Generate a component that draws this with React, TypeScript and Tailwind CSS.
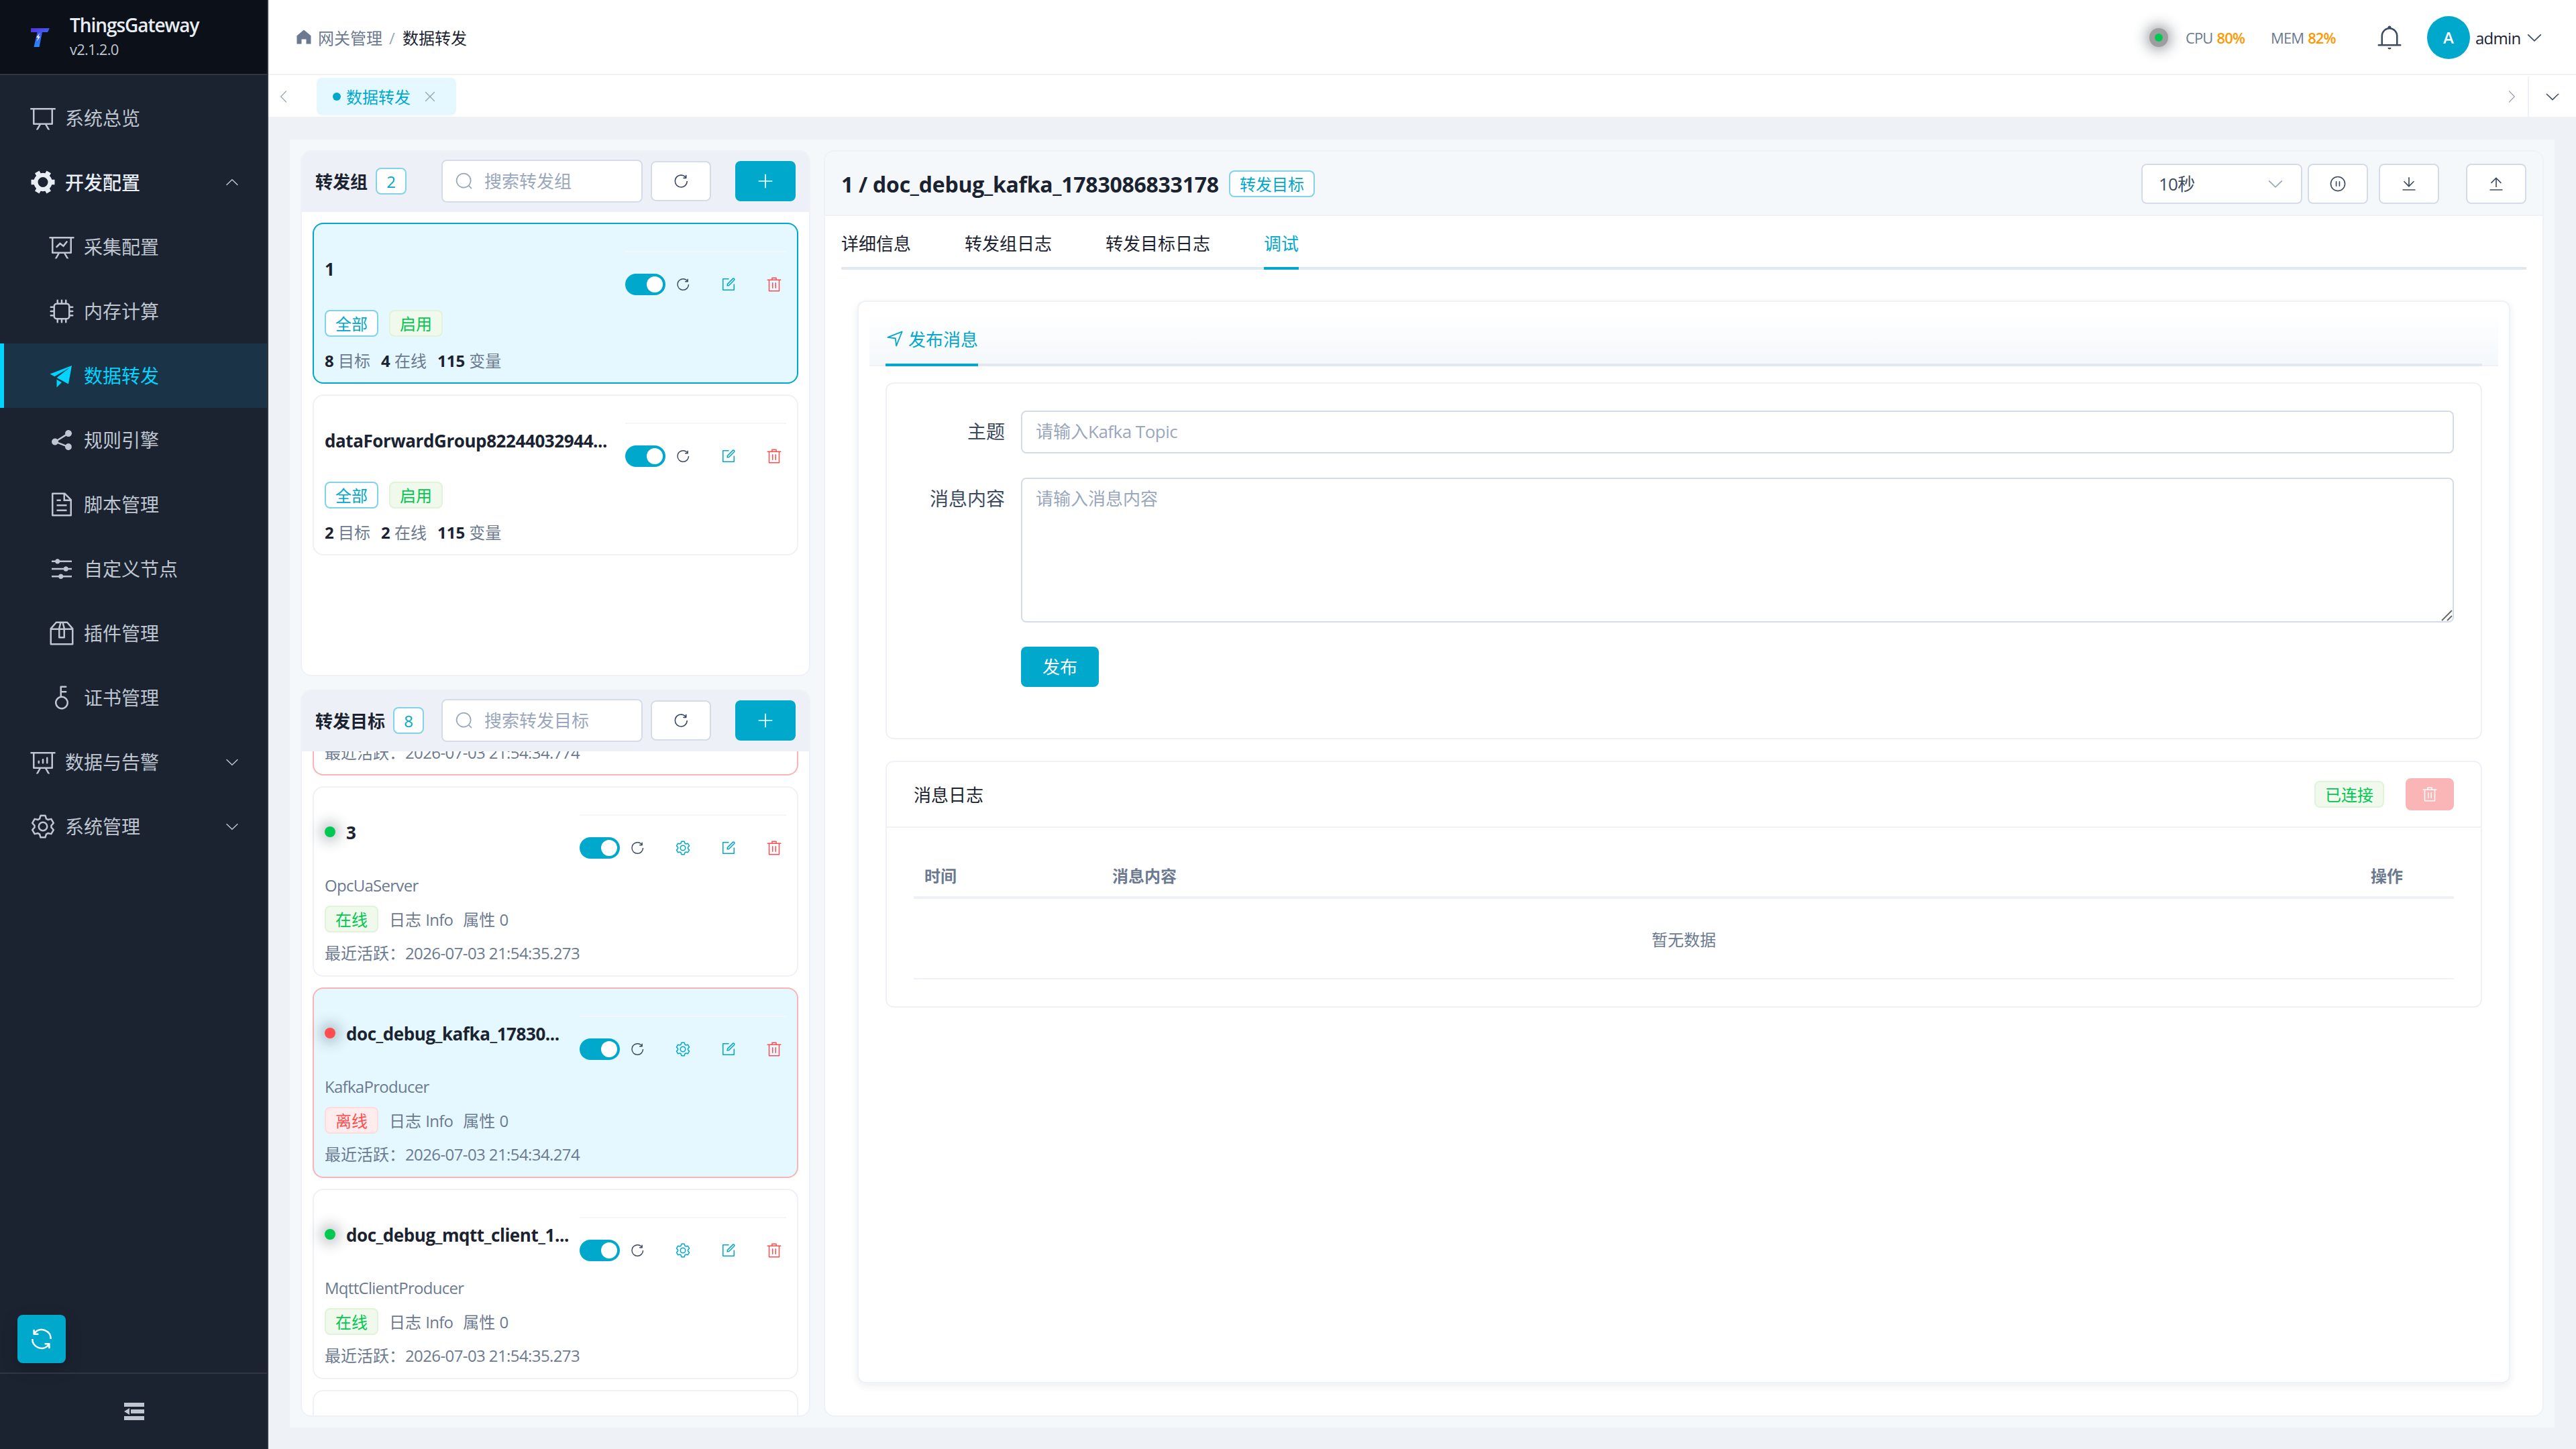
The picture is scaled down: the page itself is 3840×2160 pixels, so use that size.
import type { ReactNode } from "react";

const icons = {
    board: "M32 128h960v64H32zM192 192v512h640V192H192zm-64-64h768v608a32 32 0 0 1-32 32H160a32 32 0 0 1-32-32V128zM322.176 960H248.32l144.64-250.56 55.424 32L322.176 960zm453.888 0h-73.856L576 741.44l55.424-32L776.064 960z",
    tools: "M764.416 254.72a351.68 351.68 0 0 1 86.336 149.184H960v192.064H850.752a351.68 351.68 0 0 1-86.336 149.312l54.72 94.72-166.272 96-54.592-94.72a352.64 352.64 0 0 1-172.48 0L371.136 936l-166.272-96 54.72-94.72a351.68 351.68 0 0 1-86.336-149.312H64v-192h109.248a351.68 351.68 0 0 1 86.336-149.312L204.8 160l166.208-96h.192l54.656 94.592a352.64 352.64 0 0 1 172.48 0L652.8 64h.128L819.2 160l-54.72 94.72zM704 499.968a192 192 0 1 0-384 0 192 192 0 0 0 384 0z",
    dataLine: "M359.168 768H160a32 32 0 0 1-32-32V192H64a32 32 0 0 1 0-64h896a32 32 0 1 1 0 64h-64v544a32 32 0 0 1-32 32H665.216l110.848 192h-73.856L591.36 768H433.024L322.176 960H248.32l110.848-192zM832 192H192v512h640V192zM342.656 534.656a32 32 0 1 1-45.312-45.312L444.992 341.76l125.44 94.08L679.04 300.032a32 32 0 1 1 49.92 39.936L581.632 524.224 451.008 426.24 342.656 534.592z",
    cpu: "M320 256a64 64 0 0 0-64 64v384a64 64 0 0 0 64 64h384a64 64 0 0 0 64-64V320a64 64 0 0 0-64-64H320zm0-64h384a128 128 0 0 1 128 128v384a128 128 0 0 1-128 128H320a128 128 0 0 1-128-128V320a128 128 0 0 1 128-128zM512 64a32 32 0 0 1 32 32v128h-64V96a32 32 0 0 1 32-32zm160 0a32 32 0 0 1 32 32v128h-64V96a32 32 0 0 1 32-32zm-320 0a32 32 0 0 1 32 32v128h-64V96a32 32 0 0 1 32-32zm160 896a32 32 0 0 1-32-32V800h64v128a32 32 0 0 1-32 32zm160 0a32 32 0 0 1-32-32V800h64v128a32 32 0 0 1-32 32zm-320 0a32 32 0 0 1-32-32V800h64v128a32 32 0 0 1-32 32zM64 512a32 32 0 0 1 32-32h128v64H96a32 32 0 0 1-32-32zm0-160a32 32 0 0 1 32-32h128v64H96a32 32 0 0 1-32-32zm0 320a32 32 0 0 1 32-32h128v64H96a32 32 0 0 1-32-32zm896-160a32 32 0 0 1-32 32H800v-64h128a32 32 0 0 1 32 32zm0-160a32 32 0 0 1-32 32H800v-64h128a32 32 0 0 1 32 32zm0 320a32 32 0 0 1-32 32H800v-64h128a32 32 0 0 1 32 32z",
    promotion: "m64 448 832-320-128 704-446.08-243.328L832 192 242.816 545.472 64 448zm256 512V657.024L512 768 320 960z",
    share: "m679.872 348.8-301.76 188.608a127.808 127.808 0 0 1 5.12 52.16l279.936 104.96a128 128 0 1 1-22.464 59.904l-279.872-104.96a128 128 0 1 1-16.64-166.272l301.696-188.608a128 128 0 1 1 33.92 54.272z",
    document: "M832 384H576V128H192v768h640V384zm-26.496-64L640 154.496V320h165.504zM160 64h480l256 256v608a32 32 0 0 1-32 32H160a32 32 0 0 1-32-32V96a32 32 0 0 1 32-32zm160 448h384v64H320v-64zm0-192h160v64H320v-64zm0 384h384v64H320v-64z",
    operation: "M389.44 768a96.064 96.064 0 0 1 181.12 0H896v64H570.56a96.064 96.064 0 0 1-181.12 0H128v-64h261.44zm192-288a96.064 96.064 0 0 1 181.12 0H896v64H762.56a96.064 96.064 0 0 1-181.12 0H128v-64h453.44zm-320-288a96.064 96.064 0 0 1 181.12 0H896v64H442.56a96.064 96.064 0 0 1-181.12 0H128v-64h133.44z",
    box: "M317.056 128 128 344.064V896h768V344.064L706.944 128H317.056zm-14.528-64h418.944a32 32 0 0 1 24.064 10.88l206.528 236.096A32 32 0 0 1 960 332.032V928a32 32 0 0 1-32 32H96a32 32 0 0 1-32-32V332.032a32 32 0 0 1 7.936-21.12L278.4 75.008A32 32 0 0 1 302.528 64zM64 320h896v64H64zM448 327.872V640h128V327.872L526.08 128h-28.16L448 327.872zM448 64h128l64 256v352a32 32 0 0 1-32 32H416a32 32 0 0 1-32-32V320l64-256z",
    key: "M448 456.064V96a32 32 0 0 1 32-32.064L672 64a32 32 0 0 1 0 64H512v128h160a32 32 0 0 1 0 64H512v128a256 256 0 1 1-64 8.064zM512 896a192 192 0 1 0 0-384 192 192 0 0 0 0 384z",
    dataAnalysis: "m665.216 768 110.848 192h-73.856L591.36 768H433.024L322.176 960H248.32l110.848-192H160a32 32 0 0 1-32-32V192H64a32 32 0 0 1 0-64h896a32 32 0 1 1 0 64h-64v544a32 32 0 0 1-32 32H665.216zM832 192H192v512h640V192zM352 448a32 32 0 0 1 32 32v64a32 32 0 0 1-64 0v-64a32 32 0 0 1 32-32zm160-64a32 32 0 0 1 32 32v128a32 32 0 0 1-64 0V416a32 32 0 0 1 32-32zm160-64a32 32 0 0 1 32 32v192a32 32 0 1 1-64 0V352a32 32 0 0 1 32-32z",
    setting: "M600.704 64a32 32 0 0 1 30.464 22.208l35.2 109.376c14.784 7.232 28.928 15.36 42.432 24.512l112.384-24.192a32 32 0 0 1 34.432 15.36L944.32 364.8a32 32 0 0 1-4.032 37.504l-77.12 85.12a357.12 357.12 0 0 1 0 49.024l77.12 85.248a32 32 0 0 1 4.032 37.504l-88.704 153.6a32 32 0 0 1-34.432 15.296L708.8 803.904c-13.44 9.088-27.648 17.28-42.368 24.512l-35.264 109.376A32 32 0 0 1 600.704 960H423.296a32 32 0 0 1-30.464-22.208L357.696 828.48a351.616 351.616 0 0 1-42.56-24.64l-112.32 24.256a32 32 0 0 1-34.432-15.36L79.68 659.2a32 32 0 0 1 4.032-37.504l77.12-85.248a357.12 357.12 0 0 1 0-48.896l-77.12-85.248A32 32 0 0 1 79.68 364.8l88.704-153.6a32 32 0 0 1 34.432-15.296l112.32 24.256c13.568-9.152 27.776-17.408 42.56-24.64l35.2-109.312A32 32 0 0 1 423.232 64H600.64zm-23.424 64H446.72l-36.352 113.088-24.512 11.968a294.113 294.113 0 0 0-34.816 20.096l-22.656 15.36-116.224-25.088-65.28 113.152 79.68 88.192-1.92 27.136a293.12 293.12 0 0 0 0 40.192l1.92 27.136-79.808 88.192 65.344 113.152 116.224-25.024 22.656 15.296a294.113 294.113 0 0 0 34.816 20.096l24.512 11.968L446.72 896h130.688l36.48-113.152 24.448-11.904a288.282 288.282 0 0 0 34.752-20.096l22.592-15.296 116.288 25.024 65.28-113.152-79.744-88.192 1.92-27.136a293.12 293.12 0 0 0 0-40.256l-1.92-27.136 79.808-88.128-65.344-113.152-116.288 24.96-22.592-15.232a287.616 287.616 0 0 0-34.752-20.096l-24.448-11.904L577.344 128zM512 320a192 192 0 1 1 0 384 192 192 0 0 1 0-384zm0 64a128 128 0 1 0 0 256 128 128 0 0 0 0-256z",
    refreshRight: "M784.512 230.272v-50.56a32 32 0 1 1 64 0v149.056a32 32 0 0 1-32 32H667.52a32 32 0 1 1 0-64h92.992A320 320 0 1 0 524.8 833.152a320 320 0 0 0 320-320h64a384 384 0 0 1-384 384 384 384 0 0 1-384-384 384 384 0 0 1 643.712-282.88z",
    refresh: "M771.776 794.88A384 384 0 0 1 128 512h64a320 320 0 0 0 555.712 216.448H654.72a32 32 0 1 1 0-64h149.056a32 32 0 0 1 32 32v148.928a32 32 0 1 1-64 0v-50.56zM276.288 295.616h92.992a32 32 0 0 1 0 64H220.16a32 32 0 0 1-32-32V178.56a32 32 0 0 1 64 0v50.56A384 384 0 0 1 896.128 512h-64a320 320 0 0 0-555.776-216.384z",
    search: "m795.904 750.72 124.992 124.928a32 32 0 0 1-45.248 45.248L750.656 795.904a416 416 0 1 1 45.248-45.248zM480 832a352 352 0 1 0 0-704 352 352 0 0 0 0 704z",
    plus: "M480 480V128a32 32 0 0 1 64 0v352h352a32 32 0 1 1 0 64H544v352a32 32 0 1 1-64 0V544H128a32 32 0 0 1 0-64h352z",
    edit: "M832 512a32 32 0 1 1 64 0v352a32 32 0 0 1-32 32H160a32 32 0 0 1-32-32V160a32 32 0 0 1 32-32h352a32 32 0 0 1 0 64H192v640h640V512zm-362.048 42.24 52.8-7.552L847.104 222.4a32 32 0 1 0-45.248-45.248L477.44 501.44l-7.552 52.8zm422.4-422.4a96 96 0 0 1 0 135.808l-331.84 331.84a32 32 0 0 1-18.112 9.088L436.8 623.68a32 32 0 0 1-36.224-36.224l15.104-105.6a32 32 0 0 1 9.024-18.112l331.904-331.84a96 96 0 0 1 135.744 0z",
    trash: "M160 256H96a32 32 0 0 1 0-64h256V95.936a32 32 0 0 1 32-32h256a32 32 0 0 1 32 32V192h256a32 32 0 1 1 0 64h-64v672a32 32 0 0 1-32 32H192a32 32 0 0 1-32-32V256zm448-64v-64H416v64h192zM224 896h576V256H224v640zm192-128a32 32 0 0 1-32-32V416a32 32 0 0 1 64 0v320a32 32 0 0 1-32 32zm192 0a32 32 0 0 1-32-32V416a32 32 0 0 1 64 0v320a32 32 0 0 1-32 32z",
    arrowDown: "M831.872 340.864 512 652.672 192.128 340.864a30.592 30.592 0 0 0-42.752 0 29.12 29.12 0 0 0 0 41.6L489.664 714.24a32 32 0 0 0 44.672 0l340.288-331.712a29.12 29.12 0 0 0 0-41.728 30.592 30.592 0 0 0-42.752 0z",
    bell: "M512 64a64 64 0 0 1 64 64v64H448v-64a64 64 0 0 1 64-64zM256 768h512V448a256 256 0 1 0-512 0v320zm256-640a320 320 0 0 1 320 320v384H192V448a320 320 0 0 1 320-320zM96 768h832q32 0 32 32t-32 32H96q-32 0-32-32t32-32zm352 128h128a64 64 0 0 1-128 0z",
    pause: "M512 64a448 448 0 1 1 0 896 448 448 0 0 1 0-896zm0 832a384 384 0 0 0 0-768 384 384 0 0 0 0 768zm-96-544q32 0 32 32v256q0 32-32 32t-32-32V384q0-32 32-32zm192 0q32 0 32 32v256q0 32-32 32t-32-32V384q0-32 32-32z",
    download: "M160 832h704a32 32 0 1 1 0 64H160a32 32 0 1 1 0-64zm384-253.696 236.288-236.352 45.248 45.248L508.8 704 192 387.2l45.248-45.248L480 584.704V128h64v450.304z",
    upload: "M160 832h704a32 32 0 1 1 0 64H160a32 32 0 1 1 0-64zm384-578.304V704h-64V247.296L237.248 490.048 192 444.8 508.8 128l316.8 316.8-45.312 45.248L544 253.696z",
    home: "M512 128 128 447.936V896h255.936V640H640v256h255.936V447.936z",
    position: "m249.6 417.088 319.744 43.072 39.168 310.272L845.12 178.88 249.6 417.088zm-129.024 47.168a32 32 0 0 1-7.68-61.44l777.792-311.04a32 32 0 0 1 41.6 41.6l-310.336 775.68a32 32 0 0 1-61.44-7.808L512 516.992l-391.424-52.736z",
    close: "M764.288 214.592 512 466.88 259.712 214.592a31.936 31.936 0 0 0-45.12 45.12L466.752 512 214.528 764.224a31.936 31.936 0 1 0 45.12 45.184L512 557.184l252.288 252.288a31.936 31.936 0 0 0 45.12-45.12L557.12 512.064l252.288-252.352a31.936 31.936 0 1 0-45.12-45.184z",
};

type IconName = keyof typeof icons;

function Icon({ name, className = "" }: { name: IconName; className?: string }) {
    return (
        <svg viewBox="0 0 1024 1024" fill="currentColor" className={`shrink-0 ${className}`}>
            <path d={icons[name]} />
        </svg>
    );
}

type MenuItem = { label: string; icon: IconName; child?: boolean; active?: boolean; arrow?: "up" | "down" };

const menu: MenuItem[] = [
    { label: "系统总览", icon: "board" },
    { label: "开发配置", icon: "tools", arrow: "up" },
    { label: "采集配置", icon: "dataLine", child: true },
    { label: "内存计算", icon: "cpu", child: true },
    { label: "数据转发", icon: "promotion", child: true, active: true },
    { label: "规则引擎", icon: "share", child: true },
    { label: "脚本管理", icon: "document", child: true },
    { label: "自定义节点", icon: "operation", child: true },
    { label: "插件管理", icon: "box", child: true },
    { label: "证书管理", icon: "key", child: true },
    { label: "数据与告警", icon: "dataAnalysis", arrow: "down" },
    { label: "系统管理", icon: "setting", arrow: "down" },
];

function Logo() {
    return (
        <svg viewBox="0 0 28 28" className="w-7 h-7 mt-px">
            <defs>
                <linearGradient id="logo" x1="0" y1="0" x2="0.5" y2="1">
                    <stop offset="0" stopColor="#5b2be0" />
                    <stop offset="1" stopColor="#1f95ff" />
                </linearGradient>
            </defs>
            <path d="M0 0h28l-3 6h-8L12.500 28H4.500L9.500 6H0z" fill="url(#logo)" />
            <path d="M13.500 7L8 14h3L8.500 20l5.500-7.500h-3z" fill="#fff" />
        </svg>
    );
}

function Sidebar() {
    return (
        <aside className="w-[400px] h-full shrink-0 flex flex-col bg-[#1b2331] border-r-2 border-[#30363f]">
            <div className="h-28 shrink-0 flex items-center pl-[46px] gap-[30px] bg-[#0c1018] border-b-2 border-[#30363f]">
                <Logo />
                <div className="flex flex-col">
                    <span className="text-[28px] leading-[36px] font-semibold text-[#e8edf3] tracking-[-0.038em]">ThingsGateway</span>
                    <span className="text-[22px] leading-[36px] text-[#bfc6d0] tracking-[-0.035em]">v2.1.2.0</span>
                </div>
            </div>
            <nav className="flex-1 pt-4">
                {menu.map((item) => (
                    <div
                        key={item.label}
                        className={`h-24 flex items-center gap-[13px] pr-10 border-l-[6px] ${item.child ? "pl-[66px]" : "pl-[38px]"} ${
                            item.active ? "bg-[#1a3346] border-[#00d4ff] text-[#00d4ff]" : "border-transparent text-[#bfc6d0]"
                        } ${item.arrow === "up" ? "text-[#e8edf3]" : ""}`}
                    >
                        <Icon name={item.icon} className="w-10 h-10" />
                        <span className={`flex-1 text-[28px] leading-10 ${item.arrow === "up" ? "font-medium" : ""}`}>{item.label}</span>
                        {item.arrow && <Icon name="arrowDown" className={`w-6 h-6 text-[#bfc6d0] ${item.arrow === "up" ? "rotate-180" : ""}`} />}
                    </div>
                ))}
            </nav>
            <div className="pl-[26px] pb-3.5">
                <button className="w-[72px] h-[72px] rounded-lg bg-[#00a8cc] text-white flex items-center justify-center shadow-[0_8px_24px_rgba(0,0,0,0.2)]">
                    <Icon name="refresh" className="w-10 h-10" />
                </button>
            </div>
            <div className="h-[114px] border-t-2 border-[#30363f] flex items-center justify-center text-[#bfc6d0]">
                <svg viewBox="0 0 30 26" fill="currentColor" className="w-[30px] h-[26px] ml-0.5">
                    <path d="M0 0h30v6H0zM10 10h20v6H10zM0 20h30v6H0zM8 8v10L0 13z" />
                </svg>
            </div>
        </aside>
    );
}

function Header() {
    return (
        <header className="h-28 shrink-0 flex items-center justify-between bg-white border-b-2 border-[#eef2f7] pl-[39px] pr-12">
            <div className="flex items-center text-2xl text-[#1b2331]">
                <Icon name="home" className="w-7 h-7 text-[#6b7a90]" />
                <span className="ml-[7px] pt-[3px] text-[#6b7a90]">网关管理</span>
                <span className="mx-2.5 pt-[3px] w-2.5 text-[#9aa7bd]">/</span>
                <span className="pt-[3px]">数据转发</span>
            </div>
            <div className="flex items-center pt-0.5 text-[22px]">
                <div className="w-7 h-7 rounded-full bg-[#9e9e9e] flex items-center justify-center shadow-[0_0_20px_4px_rgba(27,35,49,0.45)]">
                    <div className="w-3 h-3 rounded-full bg-[#00c853]" />
                </div>
                <div className="ml-[26px] w-[92px] flex gap-1.5 tracking-[-0.04em] text-[#6b7a90] whitespace-nowrap">
                    <span>CPU</span>
                    <b className="text-[#ff9800] font-semibold">80%</b>
                </div>
                <div className="ml-[35px] w-[100px] flex gap-1.5 tracking-[-0.04em] text-[#6b7a90] whitespace-nowrap">
                    <span>MEM</span>
                    <b className="text-[#ff9800] font-semibold">82%</b>
                </div>
                <Icon name="bell" className="w-10 h-10 ml-[57px] text-[#3c4a60]" />
                <div className="w-16 h-16 ml-9 rounded-full bg-[#00a8cc] text-white text-2xl font-semibold flex items-center justify-center">A</div>
                <span className="ml-2 pt-0.5 w-[68px] text-[24px] tracking-[-0.03em] text-[#1b2331]">admin</span>
                <Icon name="arrowDown" className="w-7 h-7 ml-1.5 text-[#3c4a60]" />
            </div>
        </header>
    );
}

function TabBar() {
    return (
        <div className="h-[62px] pt-0.5 shrink-0 flex items-center bg-white">
            <Icon name="arrowDown" className="w-6 h-6 ml-[11px] rotate-90 text-[#9aa7bd]" />
            <div className="ml-[37px] h-14 w-52 pl-6 rounded-lg bg-[#e5f8ff] text-[#00a8cc] flex items-center text-2xl">
                <div className="w-3 h-3 rounded-full bg-[#00a8cc]" />
                <span className="ml-2 pt-0.5">数据转发</span>
                <Icon name="close" className="w-6 h-6 ml-[17px] text-[#9aa7bd]" />
            </div>
            <Icon name="arrowDown" className="w-6 h-6 ml-auto -rotate-90 text-[#9aa7bd]" />
            <div className="ml-3 w-[72px] h-[60px] border-l-2 border-[#eef2f7] flex items-center justify-center">
                <Icon name="arrowDown" className="w-[26px] h-[26px] text-[#3c4a60]" />
            </div>
        </div>
    );
}

type TagKind = "plain" | "success" | "danger";

const tagStyles: Record<TagKind, string> = {
    plain: "bg-white border-[#80d4e6] text-[#00a8cc]",
    success: "bg-[#f0f9eb] border-[#e1f3d8] text-[#00c853]",
    danger: "bg-[#ffeded] border-[#ffdcdc] text-[#ff4d4f]",
};

function Tag({ kind, children, className = "" }: { kind: TagKind; children: ReactNode; className?: string }) {
    return (
        <span className={`inline-flex items-center justify-center h-10 pt-0.5 px-3.5 rounded-lg border-2 text-2xl leading-none shrink-0 ${tagStyles[kind]} ${className}`}>
            {children}
        </span>
    );
}

function IconButton({ name, className = "" }: { name: IconName; className?: string }) {
    return (
        <button className={`w-[90px] h-[60px] shrink-0 rounded-lg border-2 border-[#d5dce8] bg-white text-[#3c4a60] flex items-center justify-center ${className}`}>
            <Icon name={name} className="w-[26px] h-[26px]" />
        </button>
    );
}

function ListPanel({ title, count, placeholder, className, children }: { title: string; count: number; placeholder: string; className: string; children: ReactNode }) {
    return (
        <section className={`flex flex-col rounded-2xl border-2 border-[#eef2f7] bg-white overflow-hidden ${className}`}>
            <div className="h-[90px] shrink-0 flex items-center bg-[#edf0f6] pl-5 pr-5 pb-0.5">
                <div className="w-[188px] flex items-center gap-3">
                    <span className="pt-[3px] text-[26px] font-bold text-[#1b2331]">{title}</span>
                    <Tag kind="plain" className="w-[46px]">{count}</Tag>
                </div>
                <div className="w-[300px] h-16 rounded-lg border-2 border-[#d5dce8] bg-white flex items-center pl-[18px] gap-4 text-[26px] text-[#9aa7bd]">
                    <Icon name="search" className="w-7 h-7" />
                    {placeholder}
                </div>
                <IconButton name="refreshRight" className="ml-3" />
                <button className="w-[90px] h-[60px] ml-auto rounded-lg bg-[#00a8cc] text-white flex items-center justify-center">
                    <Icon name="plus" className="w-[26px] h-[26px]" />
                </button>
            </div>
            {children}
        </section>
    );
}

function Actions({ setting }: { setting?: boolean }) {
    return (
        <div className={`h-[98px] mt-6 shrink-0 border-t-2 border-[#f4f6fa] flex items-start pt-8 ${setting ? "w-[308px]" : "w-[240px]"}`}>
            <div className="w-[60px] h-8 rounded-full bg-[#00a8cc] flex items-center justify-end pr-1">
                <div className="w-6 h-6 rounded-full bg-white" />
            </div>
            <div className="h-8 flex-1 pl-3.5 pr-1.5 flex items-center justify-between">
                <Icon name="refreshRight" className="w-6 h-6 text-[#3c4a60]" />
                {setting && <Icon name="setting" className="w-6 h-6 text-[#00a8cc]" />}
                <Icon name="edit" className="w-6 h-6 text-[#00a8cc]" />
                <Icon name="trash" className="w-6 h-6 text-[#ff4d4f]" />
            </div>
        </div>
    );
}

type Group = { name: string; targets: number; online: number; vars: number; selected?: boolean };

const groups: Group[] = [
    { name: "1", targets: 8, online: 4, vars: 115, selected: true },
    { name: "dataForwardGroup82244032944...", targets: 2, online: 2, vars: 115 },
];

function GroupCard({ group }: { group: Group }) {
    return (
        <div className={`h-60 shrink-0 rounded-2xl border-2 px-4 pt-4 ${group.selected ? "bg-[#e5f8ff] border-[#00a8cc]" : "bg-white border-[#eef2f7]"}`}>
            <div className="h-28 flex justify-between">
                <span className="pt-[33px] text-[26px] leading-9 font-bold text-[#1b2331] tracking-[-0.016em] whitespace-nowrap">{group.name}</span>
                <Actions />
            </div>
            <div className="flex gap-4">
                <Tag kind="plain">全部</Tag>
                <Tag kind="success">启用</Tag>
            </div>
            <div className="mt-5 flex gap-4 text-2xl leading-8 text-[#6b7a90]">
                <span><b className="text-[#1b2331]">{group.targets}</b> 目标</span>
                <span><b className="text-[#1b2331]">{group.online}</b> 在线</span>
                <span><b className="text-[#1b2331]">{group.vars}</b> 变量</span>
            </div>
        </div>
    );
}

type Target = { name: string; plugin: string; online: boolean; active: string; selected?: boolean };

const targets: Target[] = [
    { name: "3", plugin: "OpcUaServer", online: true, active: "2026-07-03 21:54:35.273" },
    { name: "doc_debug_kafka_17830...", plugin: "KafkaProducer", online: false, active: "2026-07-03 21:54:34.274", selected: true },
    { name: "doc_debug_mqtt_client_1...", plugin: "MqttClientProducer", online: true, active: "2026-07-03 21:54:35.273" },
];

function LastActive({ time, className }: { time: string; className: string }) {
    return (
        <div className={`text-2xl leading-8 text-[#6b7a90] ${className}`}>
            最近活跃：<span className="tracking-[-0.025em]">{time}</span>
        </div>
    );
}

function TargetCard({ target }: { target: Target }) {
    return (
        <div className={`h-[284px] shrink-0 rounded-2xl border-2 px-4 pt-4 ${target.selected ? "bg-[#e5f8ff]" : "bg-white"} ${target.online ? "border-[#eef2f7]" : "border-[#f9b4b6]"}`}>
            <div className="h-28 flex justify-between">
                <div className="h-[100px] flex items-center gap-4">
                    <div className={`w-4 h-4 rounded-full shadow-[0_0_20px_6px_rgba(27,35,49,0.3)] ${target.online ? "bg-[#00c853]" : "bg-[#ff4d4f]"}`} />
                    <span className="pt-0.5 text-[26px] leading-9 font-bold text-[#1b2331] tracking-[-0.017em] whitespace-nowrap">{target.name}</span>
                </div>
                <Actions setting />
            </div>
            <div className="h-12 text-2xl leading-9 text-[#6b7a90] tracking-[-0.03em]">{target.plugin}</div>
            <div className="flex items-center gap-4 text-2xl text-[#6b7a90]">
                <Tag kind={target.online ? "success" : "danger"}>{target.online ? "在线" : "离线"}</Tag>
                <span className="pt-0.5">日志 <span className="tracking-[-0.03em]">Info</span></span>
                <span className="pt-0.5 -ml-px">属性 0</span>
            </div>
            <LastActive time={target.active} className="mt-[15px]" />
        </div>
    );
}

const tabs = ["详细信息", "转发组日志", "转发目标日志", "调试"];

function DetailHeader() {
    return (
        <div className="h-24 shrink-0 flex items-center bg-[#f4f8fb] border-b-2 border-[#eef2f7] px-6">
            <h1 className="w-[578px] pt-[3px] text-[32px] font-bold text-[#1b2331] tracking-[-0.008em] whitespace-nowrap">1 / doc_debug_kafka_1783086833178</h1>
            <Tag kind="plain" className="mt-0.5">转发目标</Tag>
            <div className="ml-auto w-60 h-[60px] mt-0.5 rounded-lg border-2 border-[#d5dce8] bg-white flex items-center justify-between px-6 text-[26px] text-[#3c4a60]">
                <span><span className="tracking-[-0.03em]">10</span>秒</span>
                <Icon name="arrowDown" className="w-7 h-7 text-[#9aa7bd]" />
            </div>
            <IconButton name="pause" className="ml-2 mt-0.5" />
            <IconButton name="download" className="ml-4 mt-0.5" />
            <IconButton name="upload" className="ml-10 mt-0.5" />
        </div>
    );
}

function PublishForm() {
    return (
        <div className="h-[532px] shrink-0 rounded-xl border-2 border-[#eef2f7] px-10 pt-10">
            <div className="flex h-16">
                <label className="w-[136px] mr-6 text-right text-[28px] leading-[62px] text-[#3c4a60]">主题</label>
                <div className="flex-1 rounded-lg border-2 border-[#d5dce8] px-5 text-[26px] leading-[58px] text-[#9aa7bd]">
                    请输入<span className="tracking-[-0.02em]">Kafka Topic</span>
                </div>
            </div>
            <div className="flex h-[216px] mt-9">
                <label className="w-[136px] mr-6 text-right text-[28px] leading-[62px] text-[#3c4a60]">消息内容</label>
                <div className="relative flex-1 rounded-lg border-2 border-[#d5dce8] px-5 text-[26px] leading-[58px] text-[#9aa7bd]">
                    请输入消息内容
                    <svg viewBox="0 0 18 18" className="absolute right-0 bottom-0 w-[18px] h-[18px]" stroke="#6b6b6b" strokeWidth="2">
                        <path d="M2 17L17 2M10 17L17 10" />
                    </svg>
                </div>
            </div>
            <button className="block ml-40 mt-9 w-[116px] h-[60px] rounded-lg bg-[#00a8cc] text-white text-[26px] leading-[56px]">发布</button>
        </div>
    );
}

function MessageLog() {
    return (
        <div className="h-[368px] mt-8 shrink-0 rounded-xl border-2 border-[#eef2f7]">
            <div className="h-[98px] flex items-center border-b-2 border-[#eef2f7] px-10">
                <span className="flex-1 pt-0.5 text-[26px] text-[#1b2331]">消息日志</span>
                <Tag kind="success">已连接</Tag>
                <button className="w-[72px] h-12 ml-8 rounded-lg bg-[#fab6b6] text-white flex items-center justify-center">
                    <Icon name="trash" className="w-6 h-6" />
                </button>
            </div>
            <div className="mx-10 mt-8 text-2xl text-[#6b7a90]">
                <div className="h-[74px] pt-4 pl-4 pr-[76px] flex border-b-4 border-[#eef2f7] font-bold leading-[48px]">
                    <span className="w-[280px]">时间</span>
                    <span className="flex-1">消息内容</span>
                    <span>操作</span>
                </div>
                <div className="h-[118px] text-center leading-[122px]">暂无数据</div>
                <div className="h-0.5 bg-[#eef2f7]" />
            </div>
        </div>
    );
}

function Detail() {
    return (
        <section className="flex-1 flex flex-col rounded-2xl border-2 border-[#eef2f7] bg-white overflow-hidden">
            <DetailHeader />
            <div className="mx-6 h-20 shrink-0 flex gap-20 shadow-[inset_0_-4px_0_#e1e8f0] text-[26px] leading-[82px] text-[#1b2331]">
                {tabs.map((tab) => (
                    <span key={tab} className={tab === "调试" ? "text-[#00a8cc] border-b-4 border-[#00a8cc]" : ""}>{tab}</span>
                ))}
            </div>
            <div className="flex-1 mx-12 mt-[46px] mb-12 px-4 pt-4 rounded-xl border-2 border-[#eef2f7] shadow-[0_4px_12px_rgba(27,35,49,0.08)]">
                <div className="h-20 px-6 bg-linear-to-b from-white to-[#f4f8fb] shadow-[inset_0_-2px_0_#eef2f7]">
                    <div className="h-20 flex shadow-[inset_0_-4px_0_#e1e8f0]">
                        <div className="flex items-center gap-1.5 border-b-4 border-[#00a8cc] text-[26px] text-[#00a8cc]">
                            <Icon name="position" className="w-7 h-7 mt-0.5" />
                            <span className="pt-1">发布消息</span>
                        </div>
                    </div>
                </div>
                <div className="px-6 pt-6">
                    <PublishForm />
                    <MessageLog />
                </div>
            </div>
        </section>
    );
}

export default function App() {
    return (
        <div className="w-[3840px] h-[2160px] flex overflow-hidden bg-[#eef2f7] font-['Open_Sans','Noto_Sans_CJK_SC',sans-serif]">
            <Sidebar />
            <div className="flex-1 flex flex-col">
                <Header />
                <TabBar />
                <main className="flex-1 mt-[34px] mx-8 mb-8 p-4 flex gap-5 bg-[#f4f8fb] min-h-0">
                    <div className="w-[760px] shrink-0 flex flex-col gap-5">
                        <ListPanel title="转发组" count={2} placeholder="搜索转发组" className="h-[784px]">
                            <div className="flex flex-col gap-4 px-4 pt-4">
                                {groups.map((group) => <GroupCard key={group.name} group={group} />)}
                            </div>
                        </ListPanel>
                        <ListPanel title="转发目标" count={8} placeholder="搜索转发目标" className="h-[1084px]">
                            {/* scrolled list: only the bottom edge of the card above is visible */}
                            <div className="flex-1 flex flex-col gap-4 overflow-hidden px-4">
                                <div className="h-9 shrink-0 rounded-b-2xl border-2 border-t-0 border-[#f9b4b6] px-4">
                                    <LastActive time="2026-07-03 21:54:34.774" className="-mt-3.5" />
                                </div>
                                {targets.map((target) => <TargetCard key={target.name} target={target} />)}
                                <div className="h-[284px] shrink-0 rounded-2xl border-2 border-[#eef2f7]" />
                            </div>
                        </ListPanel>
                    </div>
                    <Detail />
                </main>
            </div>
        </div>
    );
}
